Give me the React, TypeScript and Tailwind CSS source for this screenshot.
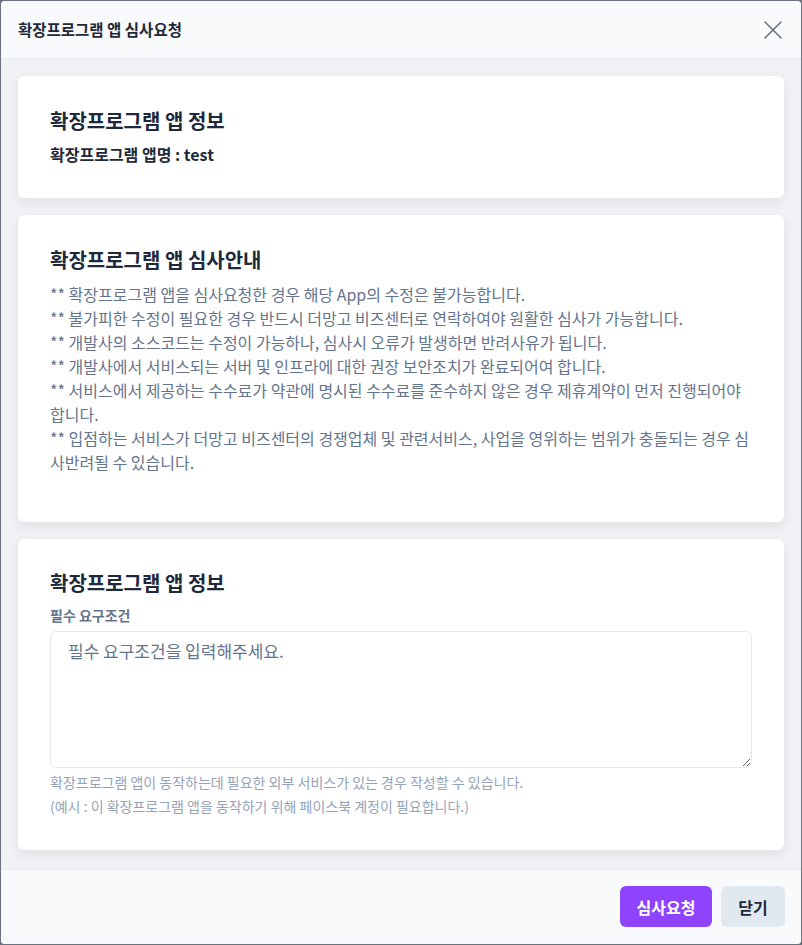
import { useState } from 'react';

const notices = [
  '** 확장프로그램 앱을 심사요청한 경우 해당 App의 수정은 불가능합니다.',
  '** 불가피한 수정이 필요한 경우 반드시 더망고 비즈센터로 연락하여야 원활한 심사가 가능합니다.',
  '** 개발사의 소스코드는 수정이 가능하나, 심사시 오류가 발생하면 반려사유가 됩니다.',
  '** 개발사에서 서비스되는 서버 및 인프라에 대한 권장 보안조치가 완료되어여 합니다.',
  '** 서비스에서 제공하는 수수료가 약관에 명시된 수수료를 준수하지 않은 경우 제휴계약이 먼저 진행되어야 합니다.',
  '** 입점하는 서비스가 더망고 비즈센터의 경쟁업체 및 관련서비스, 사업을 영위하는 범위가 충돌되는 경우 심사반려될 수 있습니다.',
];

export default function App() {
  const [requirement, setRequirement] = useState('');

  return (
    <div
      className="h-screen bg-[#6b7280] p-px"
      style={{ fontFamily: '"Noto Sans CJK KR", "Noto Sans", sans-serif' }}
    >
      <div className="flex h-full flex-col overflow-hidden rounded-[4px] bg-white">
        {/* Header */}
        <header className="flex h-[58px] shrink-0 items-center justify-between border-b border-[#e2e8f0] bg-[#f8fafc] pl-[17px] pr-[16px]">
          <h1 className="text-[15.5px] font-bold text-[#1f2937]">확장프로그램 앱 심사요청</h1>
          <button className="flex h-6 w-6 items-center justify-center text-[#6b7280]">
            <svg width="18" height="18" viewBox="0 0 18 18" fill="none" stroke="currentColor" strokeWidth="1.6" strokeLinecap="round">
              <path d="M1 1L17 17M17 1L1 17" />
            </svg>
          </button>
        </header>

        {/* Body */}
        <main className="flex flex-1 flex-col gap-[17px] bg-[#f1f2f5] px-[17px] py-[17px]">
          <section className="rounded-md bg-white px-8 pb-[33px] pt-[31px] shadow-[0_4px_12px_rgba(15,23,42,0.08)]">
            <h2 className="text-[20px] font-bold leading-7 text-[#1e293b]">확장프로그램 앱 정보</h2>
            <p className="mt-2 text-[16px] font-bold leading-[22px] text-[#1e293b]">확장프로그램 앱명 : test</p>
          </section>

          <section className="rounded-md bg-white px-8 pb-12 pt-[31px] shadow-[0_4px_12px_rgba(15,23,42,0.08)]">
            <h2 className="text-[20px] font-bold leading-7 text-[#1e293b]">확장프로그램 앱 심사안내</h2>
            <div className="mt-2 text-[16px] leading-6 text-[#64748b]">
              {notices.map((n) => (
                <p key={n}>{n}</p>
              ))}
            </div>
          </section>

          <section className="rounded-md bg-white px-8 pb-8 pt-[30px] shadow-[0_4px_12px_rgba(15,23,42,0.08)]">
            <h2 className="text-[20px] font-bold leading-7 text-[#1e293b]">확장프로그램 앱 정보</h2>
            <label className="mt-2 block text-[14px] font-semibold leading-5 text-[#64748b]">필수 요구조건</label>
            <textarea
              value={requirement}
              onChange={(e) => setRequirement(e.target.value)}
              placeholder="필수 요구조건을 입력해주세요."
              className="mt-1.5 block h-[137px] w-full rounded-md border border-[#e2e8f0] px-[17px] py-[7px] text-[17px] leading-6 text-[#334155] outline-none placeholder:text-[#64748b]"
            />
            <div className="mt-0.5 text-[14px] leading-6 text-[#94a3b8]">
              <p>확장프로그램 앱이 동작하는데 필요한 외부 서비스가 있는 경우 작성할 수 있습니다.</p>
              <p>(예시 : 이 확장프로그램 앱을 동작하기 위해 페이스북 계정이 필요합니다.)</p>
            </div>
          </section>
        </main>

        {/* Footer */}
        <footer className="flex h-[75px] shrink-0 items-start justify-end gap-[9px] border-t border-[#e2e8f0] bg-[#f8fafc] pr-[16px] pt-[16px]">
          <button className="h-[41px] w-[92px] rounded-md bg-[#8f43fc] text-[16px] font-bold text-white">심사요청</button>
          <button className="h-[41px] w-[64px] rounded-md bg-[#e2e8f0] text-[16px] font-bold text-[#1e293b]">닫기</button>
        </footer>
      </div>
    </div>
  );
}
